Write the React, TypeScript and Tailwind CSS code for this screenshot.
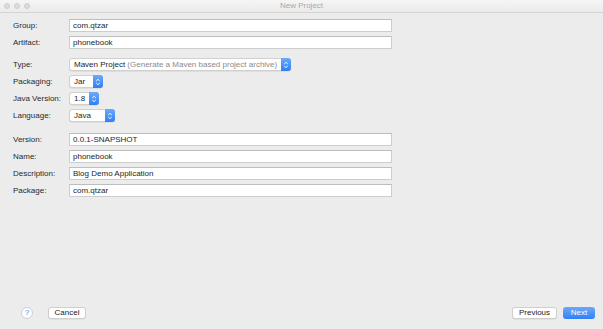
import React from "react";

const font = { fontFamily: '"Liberation Sans", Arial, sans-serif' };

function Stepper() {
  return (
    <div className="w-[10px] self-stretch bg-gradient-to-b from-[#6aaaf9] to-[#2f7ff3] rounded-r-[3px] flex items-center justify-center -my-px -mr-px">
      <svg width="6" height="8" viewBox="0 0 6 8">
        <path d="M1.2 3 L3 1.3 L4.8 3" stroke="white" strokeWidth="0.9" fill="none" />
        <path d="M1.2 5 L3 6.7 L4.8 5" stroke="white" strokeWidth="0.9" fill="none" />
      </svg>
    </div>
  );
}

function TextRow({ label, value }: { label: string; value: string }) {
  return (
    <div className="flex items-center h-[13px]">
      <div className="w-[56px] text-[8px] text-[#2a2a2a] leading-none">{label}</div>
      <div className="w-[323px] h-[13px] bg-white border border-[#cdcdcd] border-t-[#bdbdbd] flex items-center pl-[3px] text-[8px] text-[#1e1e1e] leading-none">
        {value}
      </div>
    </div>
  );
}

function SelectRow({ label, width, children }: { label: string; width: string; children: React.ReactNode }) {
  return (
    <div className="flex items-center h-[13px]">
      <div className="w-[56px] text-[8px] text-[#2a2a2a] leading-none">{label}</div>
      <div className={`${width} h-[13px] bg-white border border-[#d0d0d0] rounded-[3px] flex items-center shadow-[0_0.5px_0.5px_rgba(0,0,0,0.12)]`}>
        <div className="flex-1 pl-[4px] text-[8px] text-[#1e1e1e] leading-none whitespace-nowrap overflow-hidden">{children}</div>
        <Stepper />
      </div>
    </div>
  );
}

export default function App() {
  return (
    <div className="w-[603px] h-[329px] bg-[#ececec] flex flex-col overflow-hidden" style={font}>
      <div className="h-[13px] shrink-0 bg-gradient-to-b from-[#f5f5f5] to-[#ebebeb] border-b border-[#d4d4d4] relative flex items-center justify-center">
        <div className="absolute left-[4px] top-[3px] flex gap-[4px]">
          <div className="w-[6px] h-[6px] rounded-full bg-[#dcdcdc] border border-[#cfcfcf]" />
          <div className="w-[6px] h-[6px] rounded-full bg-[#dcdcdc] border border-[#cfcfcf]" />
          <div className="w-[6px] h-[6px] rounded-full bg-[#dcdcdc] border border-[#cfcfcf]" />
        </div>
        <div className="text-[8px] text-[#a8a8a8] leading-none">New Project</div>
      </div>

      <div className="pl-[13px] flex flex-col">
        <div className="mt-[6px] flex flex-col gap-[4px]">
          <TextRow label="Group:" value="com.qtzar" />
          <TextRow label="Artifact:" value="phonebook" />
        </div>
        <div className="mt-[9px] flex flex-col gap-[4px]">
          <SelectRow label="Type:" width="w-[222px]">
            Maven Project <span className="text-[#8a8a8a]">(Generate a Maven based project archive)</span>
          </SelectRow>
          <SelectRow label="Packaging:" width="w-[34px]">Jar</SelectRow>
          <SelectRow label="Java Version:" width="w-[30px]">1.8</SelectRow>
          <SelectRow label="Language:" width="w-[46px]">Java</SelectRow>
        </div>
        <div className="mt-[11px] flex flex-col gap-[4px]">
          <TextRow label="Version:" value="0.0.1-SNAPSHOT" />
          <TextRow label="Name:" value="phonebook" />
          <TextRow label="Description:" value="Blog Demo Application" />
          <TextRow label="Package:" value="com.qtzar" />
        </div>
      </div>

      <div className="flex-1" />

      <div className="h-[12px] mb-[10px] flex items-center pl-[21px] pr-[8px]">
        <div className="w-[12px] h-[12px] rounded-full bg-white border border-[#cfcfcf] flex items-center justify-center text-[8px] text-[#3b88f5] leading-none">?</div>
        <div className="ml-[15px] w-[38px] h-[12px] bg-white border border-[#cfcfcf] rounded-[3px] flex items-center justify-center text-[8px] text-[#222] leading-none shadow-[0_0.5px_0.5px_rgba(0,0,0,0.1)]">Cancel</div>
        <div className="flex-1" />
        <div className="w-[45px] h-[12px] bg-white border border-[#cfcfcf] rounded-[3px] flex items-center justify-center text-[8px] text-[#222] leading-none shadow-[0_0.5px_0.5px_rgba(0,0,0,0.1)]">Previous</div>
        <div className="ml-[6px] w-[32px] h-[12px] bg-gradient-to-b from-[#69a9f9] to-[#2f80f4] rounded-[3px] flex items-center justify-center text-[8px] text-white leading-none">Next</div>
      </div>
    </div>
  );
}
